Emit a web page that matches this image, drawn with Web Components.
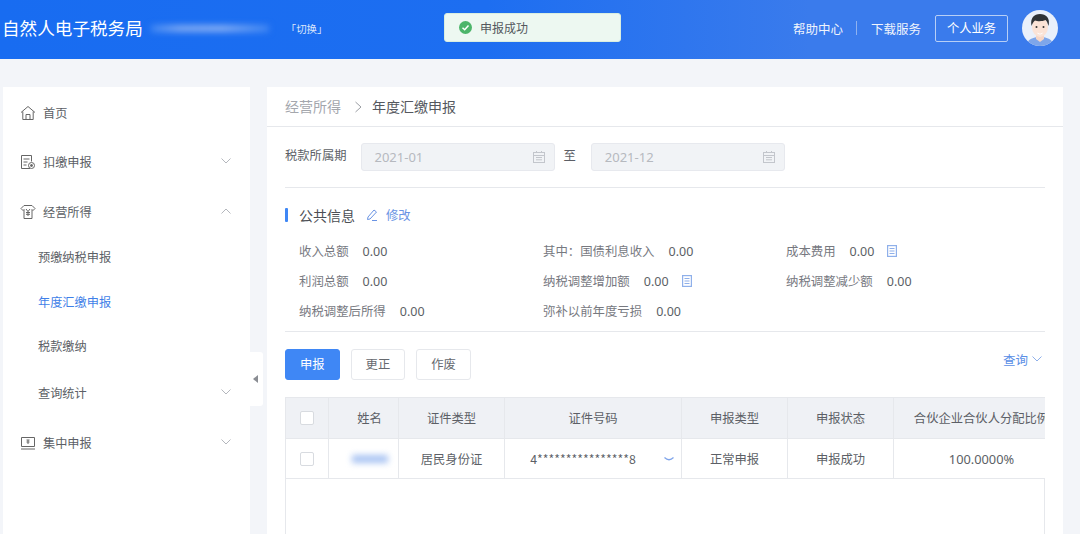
<!DOCTYPE html>
<html lang="zh-CN"><head><meta charset="utf-8"><title>年度汇缴申报</title>
<style>
html,body{margin:0;height:534px;overflow:hidden;background:#f3f5f9;font-family:"Noto Sans CJK SC","Noto Sans",sans-serif;color:#5c5f66}
</style></head><body>
<app-shell></app-shell>
<script>
const CHEV='<svg width="10" height="6" viewBox="0 0 10 6" fill="none" stroke="currentColor" stroke-width="1"><path d="M.5.5 5 5 9.500.5"/></svg>';
const DOC='<svg width="10" height="12" viewBox="0 0 10 12" fill="none" stroke="#8fb0ea" stroke-width="1.2"><rect x=".6" y=".6" width="8.800" height="10.800"/><path d="M2.500 3.500h5M2.500 6h5M2.500 8.500h5"/></svg>';
const CAL='<svg width="12" height="12" viewBox="0 0 12 12" fill="none" stroke="#c3c6cc" stroke-width="1"><rect x=".5" y="1.500" width="11" height="10"/><path d="M.5 4.500h11M3 6.500h6M3 8.800h6M3.500 0v2M8.500 0v2"/></svg>';
const ICONS={
home:'<svg width="16" height="16" viewBox="0 0 16 16" fill="none" stroke="#666" stroke-width="1"><path d="M1 7.500 8 1.500l7 6M2.800 6.500v8h10.400v-8M6 14.500v-5h4v5"/></svg>',
doc:'<svg width="16" height="16" viewBox="0 0 16 16" fill="none" stroke="#666" stroke-width="1"><path d="M10 14.500H1.500v-13h10v6"/><path d="M3.500 5h6M3.500 8h4M3.500 11h3"/><circle cx="11.500" cy="11.500" r="3"/><circle cx="11.500" cy="11.500" r="1" fill="#666"/></svg>',
yen:'<svg width="16" height="16" viewBox="0 0 16 16" fill="none" stroke="#666" stroke-width="1"><path d="M4 1.500h8l3 3-2 2-1-1v9H4v-9l-1 1-2-2z"/><path d="M6 5l2 2.500L10 5M8 7.500V12M6 8.500h4M6 10.300h4"/></svg>',
desk:'<svg width="16" height="16" viewBox="0 0 16 16" fill="none" stroke="#666" stroke-width="1"><path d="M1.500 2.500h13v9h-13zM1 14h14"/><path d="M6.500 5h3M8 5v4M6.500 7h3"/></svg>'};

class BaseEl extends HTMLElement{
  render(html){this.attachShadow({mode:'open'}).innerHTML=html}
}
class AppShell extends BaseEl{connectedCallback(){this.render(`<style>
:host{display:block;width:1080px;height:534px;overflow:hidden;position:relative}
.body{display:flex;padding:28px 17px 0 3px;align-items:flex-start}
.handle{position:absolute;left:250px;top:352px;width:13px;height:54px;background:#fff;border-radius:0 3px 3px 0;display:flex;align-items:center;padding-left:3px;box-sizing:border-box}
.handle i{border:4px solid transparent;border-right:5px solid #8a8d93;border-left:0}
</style>
<app-header></app-header>
<div class="body"><side-nav></side-nav><main-panel></main-panel></div>
<div class="handle"><i></i></div>
<toast-msg>申报成功</toast-msg>`)}}
class AppHeader extends BaseEl{connectedCallback(){this.render(`<style>
:host{display:flex;align-items:center;height:59px;background:linear-gradient(90deg,#186cf1,#1d6ef1 45%,#3a7bec 75%,#3a7bec);color:#fff;box-sizing:border-box;padding:0 22px 3px 2px}
h1{margin:0;font-size:17.6px;font-weight:400;line-height:1;white-space:nowrap}
.blur{width:118px;height:7px;margin-left:8px;background:linear-gradient(90deg,#3f86f3,#7ea9f3 25%,#86aef4 60%,#3f86f3);filter:blur(3px)}
.sw{font-size:10.4px;margin-left:17px;color:#dbe6fb}
.sp{flex:1}
.lnk{font-size:12.5px;color:#f0f4fc}
.sep{width:1px;height:14px;background:#8fb2f0;margin:0 14px 0 13px}
.btn{font-size:12.3px;width:73px;height:27px;box-sizing:border-box;border:1px solid #b7cff6;border-radius:2px;display:flex;align-items:center;justify-content:center;margin:0 14px 0 14px}
svg{display:block}
</style>
<h1>自然人电子税务局</h1><div class="blur"></div><span class="sw">「切换」</span><span class="sp"></span>
<span class="lnk">帮助中心</span><span class="sep"></span><span class="lnk">下载服务</span><span class="btn">个人业务</span>
<svg width="36" height="36" viewBox="0 0 36 36"><defs><clipPath id="c"><circle cx="18" cy="18" r="18"/></clipPath></defs><g clip-path="url(#c)"><rect width="36" height="36" fill="#e9f0fb"/><path d="M4 38c0-8 6-11 14-11s14 3 14 11z" fill="#7ea6ea"/><path d="M14 22h8v7l-4 3-4-3z" fill="#f6d6c6"/><ellipse cx="18" cy="17" rx="8" ry="10" fill="#fbe3d6"/><path d="M9.500 16C8 8 12 4 18 4s10.500 4 8.500 12c-1-3-1.500-5-3-6-3 1.500-8 1.500-10.500.5-1.500 1-2.500 3-3.500 5.500z" fill="#2f3336"/><path d="M15 22.500c2 1.500 4 1.500 6 0-.5 2.500-5.500 2.500-6 0z" fill="#fff"/><circle cx="14.500" cy="17" r="1" fill="#333"/><circle cx="21.500" cy="17" r="1" fill="#333"/></g></svg>`)}}
class ToastMsg extends BaseEl{connectedCallback(){this.render(`<style>
:host{position:absolute;left:444px;top:13px;width:177px;height:29px;box-sizing:border-box;background:#edf8f1;border:1px solid #d9eee0;border-radius:3px;display:flex;align-items:center;padding-left:14px;gap:8px;font-size:12px;color:#55585e}
</style><svg width="13" height="13" viewBox="0 0 13 13"><circle cx="6.500" cy="6.500" r="6.500" fill="#4cb56a"/><path d="M3.500 6.700 5.700 8.800 9.500 4.600" fill="none" stroke="#fff" stroke-width="1.500"/></svg><slot></slot>`)}}
class SideNav extends BaseEl{connectedCallback(){this.render(`<style>
:host{display:block;width:247px;height:447px;background:#fff;padding-top:4px;flex:none}
</style>
<nav-item icon="home" style="margin-top:0">首页</nav-item>
<nav-item icon="doc" arrow="down" style="margin-top:5px">扣缴申报</nav-item>
<nav-item icon="yen" arrow="up" style="margin-top:6px">经营所得</nav-item>
<nav-item sub style="margin-top:1px">预缴纳税申报</nav-item>
<nav-item sub active style="margin-top:1px">年度汇缴申报</nav-item>
<nav-item sub>税款缴纳</nav-item>
<nav-item sub arrow="down" style="margin-top:3px">查询统计</nav-item>
<nav-item icon="desk" arrow="down" style="margin-top:6px">集中申报</nav-item>`)}}
class NavItem extends BaseEl{connectedCallback(){
 const ic=this.getAttribute('icon'),ar=this.getAttribute('arrow');
 this.render(`<style>
:host{display:flex;align-items:center;height:44px;font-size:12.2px;color:#5c5f66;padding-left:17px;padding-right:19px;position:relative}
:host([sub]){padding-left:35px}
:host([active]){color:#3f7fe8}
.ic{width:16px;height:16px;margin-right:7px;flex:none}
svg{display:block}
.sp{flex:1}
.ar{color:#b4b7bd;transform:translateY(-1px)}
.up{transform:rotate(180deg) translateY(1px)}
</style>${ic?`<span class="ic">${ICONS[ic]}</span>`:''}<slot></slot><span class="sp"></span>${ar?`<span class="ar ${ar=='up'?'up':''}">${CHEV}</span>`:''}`)}}
class MainPanel extends BaseEl{connectedCallback(){this.render(`<style>
:host{display:block;width:796px;height:447px;margin-left:17px;background:#fff;flex:none;overflow:hidden}
.crumb{height:39px;box-sizing:content-box;border-bottom:1px solid #e6e8ec;display:flex;align-items:center;padding-left:18px;font-size:14px;color:#a4a7ad;line-height:37px}
.crumb svg{margin:0 10px 0 14px}
.crumb b{font-weight:400;color:#55585e}
.wrap{padding:0 18px}
.period{display:flex;align-items:center;height:60px;border-bottom:1px solid #e6e8ec;font-size:12.3px}
.period .to{margin:0 15px 0 9px;position:relative;top:-2px}
.period .lb{margin-right:14px;position:relative;top:-2px}
.sec{display:flex;align-items:center;height:27px;margin-top:13px;font-size:14px;color:#4c4f55}
.sec i{width:3px;height:14px;background:#3f87f5;border-radius:1px;margin-right:11px}
.sec svg{margin:0 8px 0 11px}
.sec a{font-size:12.3px;color:#6a94e4}
.grid{display:grid;grid-template-columns:244px 243px auto;grid-auto-rows:30px;padding:8px 0 5px 14px;border-bottom:1px solid #e6e8ec}
.bar{display:flex;align-items:center;gap:11px;height:66px;margin-bottom:-1px}
.q{margin-left:auto;font-size:12.5px;color:#5b8fe6;display:flex;align-items:center;gap:4px;position:relative;top:-6px}
.q svg{color:#8fb0ea;margin-right:3px}
</style>
<div class="crumb"><span>经营所得</span><svg width="7" height="12" viewBox="0 0 7 12" fill="none" stroke="#9a9da3"><path d="M.5 1 6 6 .5 11"/></svg><b>年度汇缴申报</b></div>
<div class="wrap">
<div class="period"><span class="lb">税款所属期</span><date-box>2021-01</date-box><span class="to">至</span><date-box>2021-12</date-box></div>
<div class="sec"><i></i>公共信息<svg width="12" height="12" viewBox="0 0 12 12" fill="none" stroke="#6a94e4"><path d="M8 1l2.500 2L4 10 1.500 10.500 2 8zM6 11.500h5"/></svg><a>修改</a></div>
<div class="grid">
<info-item label="收入总额" value="0.00"></info-item><info-item label="其中：国债利息收入" value="0.00"></info-item><info-item label="成本费用" value="0.00" doc></info-item>
<info-item label="利润总额" value="0.00"></info-item><info-item label="纳税调整增加额" value="0.00" doc></info-item><info-item label="纳税调整减少额" value="0.00"></info-item>
<info-item label="纳税调整后所得" value="0.00"></info-item><info-item label="弥补以前年度亏损" value="0.00"></info-item>
</div>
<div class="bar"><ui-btn primary>申报</ui-btn><ui-btn>更正</ui-btn><ui-btn>作废</ui-btn><span class="q">查询${CHEV}</span></div>
<data-table></data-table>
</div>`)}}
class DateBox extends BaseEl{connectedCallback(){this.render(`<style>
:host{display:flex;align-items:center;justify-content:space-between;width:194px;height:28px;box-sizing:border-box;background:#f1f3f6;border:1px solid #e7e9ee;border-radius:3px;padding:0 9px 0 13px;font:13px "Noto Sans","Noto Sans CJK SC",sans-serif;color:#b6b9bf}
svg{display:block}
</style><slot></slot>${CAL}`)}}
class InfoItem extends BaseEl{connectedCallback(){this.render(`<style>
:host{display:flex;align-items:center;font-size:12.4px;color:#77797f;height:30px;white-space:nowrap}
.v{margin-left:14px;color:#5c5f66;font:12.5px "Noto Sans",sans-serif}
svg{display:block;margin-left:13px}
</style><span>${this.getAttribute('label')}</span><span class="v">${this.getAttribute('value')}</span>${this.hasAttribute('doc')?DOC:''}`)}}
class UiBtn extends BaseEl{connectedCallback(){this.render(`<style>
:host{display:flex;align-items:center;justify-content:center;width:54.6px;height:31px;box-sizing:border-box;border:1px solid #e6e8ec;border-radius:3px;font-size:12.3px;color:#66696f;background:#fff;position:relative;top:-1px}
:host([primary]){background:#3f87f5;border-color:#3f87f5;color:#fff}
</style><slot></slot>`)}}
class DataTable extends BaseEl{connectedCallback(){
 const cols=[43,70,106,177,106,106,176];
 const H=['','姓名','证件类型','证件号码','申报类型','申报状态','合伙企业合伙人分配比例'];
 const R=['','','居民身份证','4****************8','正常申报','申报成功','100.0000%'];
 const cb='<span class="cb"></span>';
 const cell=(t,i,h)=>`<div class="c ${h?'h':''} ${i==3&&!h?'id':''} ${i==6&&!h?'pc':''}" style="width:${cols[i]}px">${i==0?cb:i==1&&!h?'<span class="bl"></span>':t}${i==3&&!h?'<svg class="m" width="10" height="4" viewBox="0 0 10 4" fill="none" stroke="#7fa4ea" stroke-width="1.2"><path d="M.5 .5Q5 5 9.500 .5"/></svg>':''}</div>`;
 this.render(`<style>
:host{display:block;width:760px;overflow:hidden;height:137px;border:1px solid #e6e8ec;border-bottom:0;border-right:0;box-sizing:border-box;font-size:12.3px;color:#5c5f66}
.r{display:flex;width:max-content;border-bottom:1px solid #e6e8ec}
.r.hd{height:40px}
.r.bd{height:39px}
.c{box-sizing:border-box;border-right:1px solid #e6e8ec;display:flex;align-items:center;justify-content:center;position:relative;flex:none;white-space:nowrap;overflow:hidden;background:#fff}
.c.h{background:#eff1f5}
.cb{width:14px;height:14px;box-sizing:border-box;border:1px solid #d8dbe0;border-radius:2px;background:#fff}
.bl{width:36px;height:8px;background:#a9c4f3;filter:blur(3px);margin-left:12px}
.m{position:absolute;right:7px;top:18px}
.r .c:nth-child(2).h{padding-left:12px}
.id{padding-right:20px}
.pc{font:12.8px "Noto Sans","Noto Sans CJK SC",sans-serif}
.empty{height:60px;border-right:1px solid #e6e8ec;width:758px}
</style><div class="r hd">${H.map((t,i)=>cell(t,i,1)).join('')}</div><div class="r bd">${R.map((t,i)=>cell(t,i,0)).join('')}</div><div class="empty"></div>`)}}
[['app-shell',AppShell],['app-header',AppHeader],['toast-msg',ToastMsg],['side-nav',SideNav],['nav-item',NavItem],['main-panel',MainPanel],['date-box',DateBox],['info-item',InfoItem],['ui-btn',UiBtn],['data-table',DataTable]].forEach(([n,c])=>customElements.define(n,c));
</script>
</body></html>
